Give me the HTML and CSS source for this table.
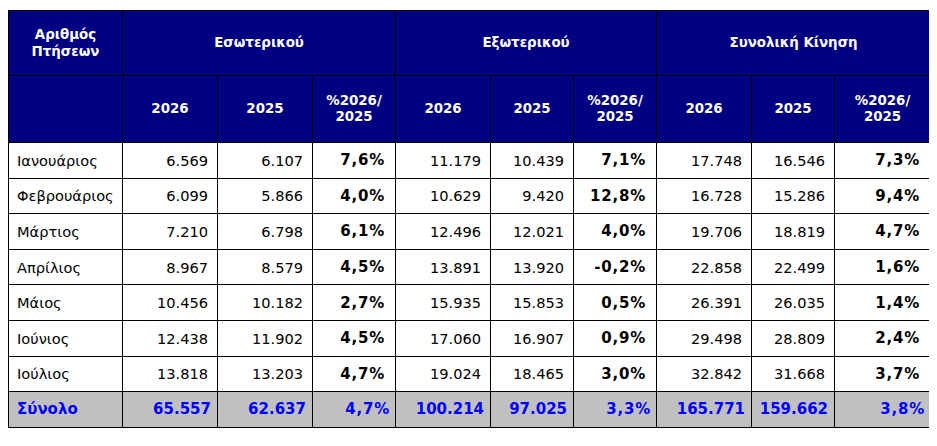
FILE: index.html
```html
<!DOCTYPE html>
<html lang="el">
<head>
<meta charset="utf-8">
<title>Αριθμός Πτήσεων</title>
<link rel="stylesheet" href="styles.css">
</head>
<body>
<table class="stats">
<colgroup>
<col class="c-label"><col class="c-a"><col class="c-a"><col class="c-p">
<col class="c-a"><col class="c-p"><col class="c-p">
<col class="c-a"><col class="c-p"><col class="c-w">
</colgroup>
<thead>
<tr class="h1">
<th class="lab">Αριθμός<br>Πτήσεων</th>
<th colspan="3">Εσωτερικού</th>
<th colspan="3">Εξωτερικού</th>
<th colspan="3">Συνολική Κίνηση</th>
</tr>
<tr class="h2">
<th></th>
<th>2026</th><th>2025</th><th>%2026/<br>2025</th>
<th>2026</th><th>2025</th><th>%2026/<br>2025</th>
<th>2026</th><th>2025</th><th>%2026/<br>2025</th>
</tr>
</thead>
<tbody>
<tr><td class="m">Ιανουάριος</td><td>6.569</td><td>6.107</td><td class="p">7,6%</td><td>11.179</td><td>10.439</td><td class="p">7,1%</td><td>17.748</td><td>16.546</td><td class="p">7,3%</td></tr>
<tr><td class="m">Φεβρουάριος</td><td>6.099</td><td>5.866</td><td class="p">4,0%</td><td>10.629</td><td>9.420</td><td class="p">12,8%</td><td>16.728</td><td>15.286</td><td class="p">9,4%</td></tr>
<tr><td class="m">Μάρτιος</td><td>7.210</td><td>6.798</td><td class="p">6,1%</td><td>12.496</td><td>12.021</td><td class="p">4,0%</td><td>19.706</td><td>18.819</td><td class="p">4,7%</td></tr>
<tr><td class="m">Απρίλιος</td><td>8.967</td><td>8.579</td><td class="p">4,5%</td><td>13.891</td><td>13.920</td><td class="p">-0,2%</td><td>22.858</td><td>22.499</td><td class="p">1,6%</td></tr>
<tr><td class="m">Μάιος</td><td>10.456</td><td>10.182</td><td class="p">2,7%</td><td>15.935</td><td>15.853</td><td class="p">0,5%</td><td>26.391</td><td>26.035</td><td class="p">1,4%</td></tr>
<tr><td class="m">Ιούνιος</td><td>12.438</td><td>11.902</td><td class="p">4,5%</td><td>17.060</td><td>16.907</td><td class="p">0,9%</td><td>29.498</td><td>28.809</td><td class="p">2,4%</td></tr>
<tr><td class="m">Ιούλιος</td><td>13.818</td><td>13.203</td><td class="p">4,7%</td><td>19.024</td><td>18.465</td><td class="p">3,0%</td><td>32.842</td><td>31.668</td><td class="p">3,7%</td></tr>
<tr class="total"><td class="m">Σύνολο</td><td>65.557</td><td>62.637</td><td class="p">4,7%</td><td>100.214</td><td>97.025</td><td class="p">3,3%</td><td>165.771</td><td>159.662</td><td class="p">3,8%</td></tr>
</tbody>
</table>
</body>
</html>
```
FILE: styles.css
```css
html, body {
  background: #ffffff;
}
body {
  margin: 10px 8px;
  font-family: "DejaVu Sans", "Liberation Sans", sans-serif;
}
.stats {
  border-collapse: collapse;
  table-layout: fixed;
  width: 919px;
  font-size: 14.6px;
  color: #000000;
}
.c-label { width: 114px; }
.c-a { width: 95px; }
.c-p { width: 83px; }
.c-w { width: 96px; }
.stats th, .stats td {
  border: 1px solid #000000;
  padding: 0;
}
.stats th {
  background: #000080;
  color: #ffffff;
  font-weight: bold;
  font-size: 13.4px;
  text-align: center;
  line-height: 16px;
}
.stats th.lab {
  line-height: 17px;
}
.h1 { height: 65px; }
.h2 { height: 67px; }
.stats tbody tr { height: 35.6px; }
.stats td {
  text-align: right;
  padding-right: 9px;
}
.stats td.m {
  text-align: left;
  padding-left: 8px;
  padding-right: 0;
  font-size: 14.6px;
}
.stats td.p {
  font-weight: bold;
  font-size: 15px;
  letter-spacing: 0.8px;
  padding-right: 10px;
}
.total td {
  background: #c0c0c0;
  color: #0000ff;
  font-weight: bold;
  font-size: 15px;
  padding-right: 6px;
}
.stats .total td.p {
  padding-right: 5px;
}
.stats .total td.m {
  font-size: 15px;
}
```
